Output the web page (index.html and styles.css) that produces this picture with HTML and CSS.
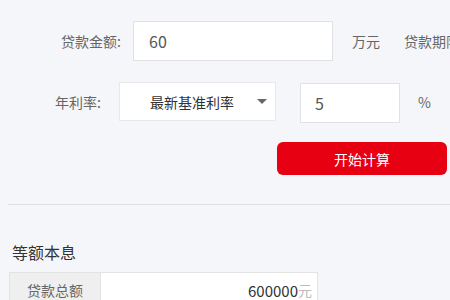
FILE: index.html
```html
<!DOCTYPE html>
<html lang="zh-CN">
<head>
<meta charset="utf-8">
<link rel="stylesheet" href="styles.css">
</head>
<body>
<div class="page">
  <div class="row row-amount">
    <span class="label label-amount">贷款金额:</span>
    <div class="field field-amount">60</div>
    <span class="unit unit-wan">万元</span>
    <span class="label label-term">贷款期限</span>
  </div>
  <div class="row row-rate">
    <span class="label label-rate">年利率:</span>
    <div class="select">
      <span class="select-text">最新基准利率</span>
      <span class="caret"></span>
    </div>
    <div class="field field-rate">5</div>
    <span class="unit unit-pct">%</span>
  </div>
  <div class="row row-btn">
    <button class="btn">开始计算</button>
  </div>
  <div class="divider"></div>
  <h2 class="title">等额本息</h2>
  <div class="table">
    <div class="cell cell-label">贷款总额</div>
    <div class="cell cell-value">600000<span class="yuan">元</span></div>
  </div>
</div>
</body>
</html>
```
FILE: styles.css
```css
* { box-sizing: border-box; }
html, body {
  margin: 0;
  padding: 0;
  background: #f5f6fa;
  font-family: "Noto Sans CJK SC", "Noto Sans", sans-serif;
  font-size: 14px;
  color: #666;
  overflow: hidden;
  width: 450px;
  height: 300px;
}
.page {
  padding-top: 21px;
  width: 450px;
}
.row {
  display: flex;
  align-items: center;
  white-space: nowrap;
}
.row > * { flex-shrink: 0; }
.label { color: #666; }
.row-amount { height: 40px; padding-left: 61px; }
.label-amount { width: 72px; }
.field {
  background: #fff;
  border: 1px solid #e1e2e6;
  display: flex;
  align-items: center;
  color: #555;
  font-size: 16px;
}
.field-amount {
  width: 200px;
  height: 40px;
  padding-left: 15px;
}
.unit-wan { margin-left: 19px; }
.label-term { margin-left: 24px; }
.row-rate {
  margin-top: 21px;
  height: 40px;
  padding-left: 55px;
  align-items: flex-start;
}
.label-rate { width: 64px; line-height: 40px; }
.select {
  width: 157px;
  height: 39px;
  background: #fff;
  border: 1px solid #e8e9ec;
  display: flex;
  align-items: center;
  padding-left: 30px;
  color: #333;
}
.select-text { width: 107px; }
.caret {
  width: 0;
  height: 0;
  border-left: 5px solid transparent;
  border-right: 5px solid transparent;
  border-top: 5px solid #666;
}
.field-rate {
  margin-left: 24px;
  margin-top: 1px;
  width: 100px;
  height: 40px;
  padding-left: 14px;
}
.unit-pct { margin-left: 18px; line-height: 40px; }
.row-btn {
  margin-top: 20px;
  padding-left: 277px;
}
.btn {
  width: 170px;
  height: 33px;
  border: none;
  border-radius: 6px;
  background: #e60012;
  color: #fff;
  font-family: "Noto Sans CJK SC", sans-serif;
  font-size: 14px;
  padding: 0;
}
.divider {
  margin: 29px 0 0 8px;
  height: 1px;
  background: #dfe1e6;
}
.title {
  margin: 36px 0 0 12px;
  font-size: 16px;
  font-weight: normal;
  color: #333;
  line-height: 22px;
}
.table {
  margin: 9px 0 0 9px;
  display: flex;
  width: 309px;
  border: 1px solid #e3e3e3;
}
.cell {
  height: 34px;
  display: flex;
  align-items: center;
}
.cell-label {
  width: 91px;
  background: #efefef;
  justify-content: center;
  color: #666;
  border-right: 1px solid #e3e3e3;
}
.cell-value {
  flex: 1;
  background: #fff;
  justify-content: flex-end;
  padding-right: 5px;
  color: #333;
  font-size: 15px;
}
.yuan { color: #bbb; font-size: 14px; }
```
